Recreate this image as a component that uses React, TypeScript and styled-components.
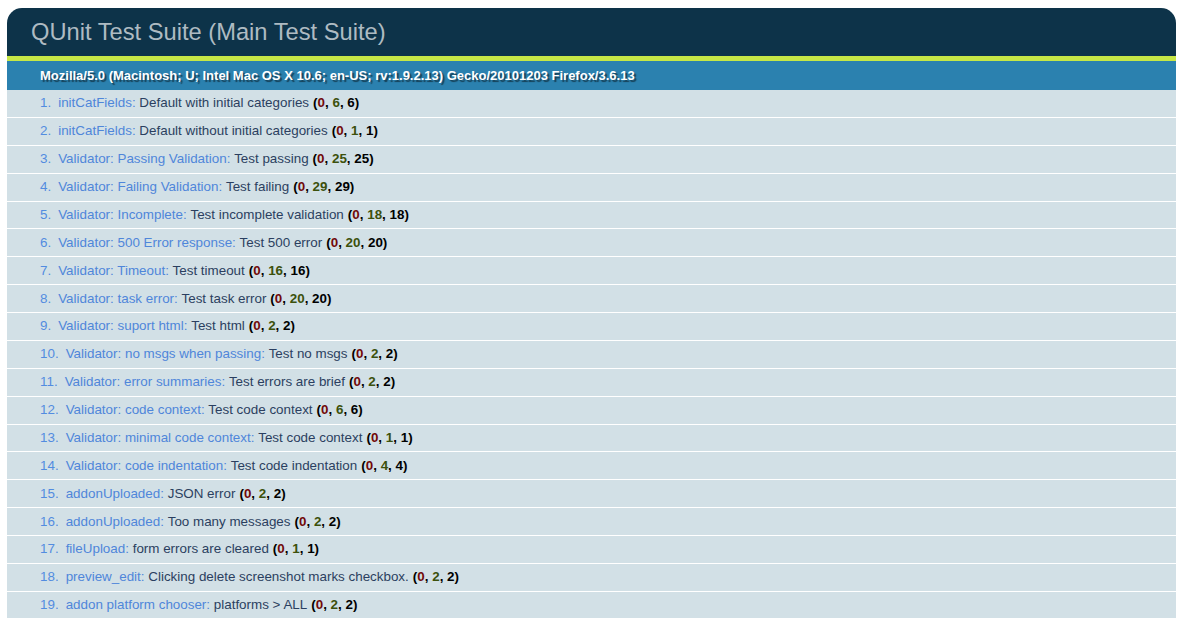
import React from "react";
import styled, { createGlobalStyle } from "styled-components";

const GlobalStyle = createGlobalStyle`
  html, body { background: #ffffff; }
  body {
    margin: 8px 8px 0 7px;
    font-family: "Liberation Sans", Arial, Helvetica, sans-serif;
    font-size: 16px;
  }
`;

const Suite = styled.div`
  display: flex;
  flex-direction: column;
`;

const Title = styled.h1`
  margin: 0;
  padding: 12px 0 12px 24px;
  font-size: 23.7px;
  line-height: 24px;
  font-weight: normal;
  color: #aebbc2;
  background: #0d3349;
  border-radius: 15px 15px 0 0;
`;

const Banner = styled.div`
  height: 5px;
  background: #c6e746;
`;

const UserAgent = styled.h2`
  margin: 0;
  padding: 6.5px 0 6.5px 33px;
  font-size: 13px;
  line-height: 16px;
  font-weight: bold;
  color: #ffffff;
  background: #2b81af;
  text-shadow: rgba(0, 0, 0, 0.5) 2px 2px 1px;
`;

const TestList = styled.ol`
  margin: 0;
  padding: 0;
  list-style: none;
  font-size: 13.4px;
`;

const TestItem = styled.li`
  display: flex;
  align-items: baseline;
  padding: 5.45px 6px 5.45px 33px;
  line-height: 16px;
  background: #d2e0e6;
  color: #528ce0;
  border-bottom: 1px solid #ffffff;
`;

const Index = styled.span`
  margin-right: 7px;
`;

const ModuleName = styled.span`
  color: #4f86da;
`;

const TestName = styled.span`
  color: #2b3f60;
`;

const Counts = styled.b`
  color: #000000;
  margin-left: 4px;
`;

const Count = styled.b<{ $kind: "failed" | "passed" }>`
  color: ${(p) => (p.$kind === "failed" ? "#710909" : "#3c510c")};
`;

type Test = { module: string; name: string; passed: number };

const tests: Test[] = [
  { module: "initCatFields", name: "Default with initial categories", passed: 6 },
  { module: "initCatFields", name: "Default without initial categories", passed: 1 },
  { module: "Validator: Passing Validation", name: "Test passing", passed: 25 },
  { module: "Validator: Failing Validation", name: "Test failing", passed: 29 },
  { module: "Validator: Incomplete", name: "Test incomplete validation", passed: 18 },
  { module: "Validator: 500 Error response", name: "Test 500 error", passed: 20 },
  { module: "Validator: Timeout", name: "Test timeout", passed: 16 },
  { module: "Validator: task error", name: "Test task error", passed: 20 },
  { module: "Validator: suport html", name: "Test html", passed: 2 },
  { module: "Validator: no msgs when passing", name: "Test no msgs", passed: 2 },
  { module: "Validator: error summaries", name: "Test errors are brief", passed: 2 },
  { module: "Validator: code context", name: "Test code context", passed: 6 },
  { module: "Validator: minimal code context", name: "Test code context", passed: 1 },
  { module: "Validator: code indentation", name: "Test code indentation", passed: 4 },
  { module: "addonUploaded", name: "JSON error", passed: 2 },
  { module: "addonUploaded", name: "Too many messages", passed: 2 },
  { module: "fileUpload", name: "form errors are cleared", passed: 1 },
  { module: "preview_edit", name: "Clicking delete screenshot marks checkbox.", passed: 2 },
  { module: "addon platform chooser", name: "platforms > ALL", passed: 2 },
];

export default function App() {
  return (
    <>
      <GlobalStyle />
      <Suite>
        <Title>QUnit Test Suite (Main Test Suite)</Title>
        <Banner />
        <UserAgent>
          Mozilla/5.0 (Macintosh; U; Intel Mac OS X 10.6; en-US; rv:1.9.2.13) Gecko/20101203 Firefox/3.6.13
        </UserAgent>
        <TestList>
          {tests.map((t, i) => (
            <TestItem key={i}>
              <Index>{i + 1}.</Index>
              <span>
                <ModuleName>{t.module}:</ModuleName>&nbsp;
                <TestName>{t.name}</TestName>
                <Counts>
                  (<Count $kind="failed">0</Count>, <Count $kind="passed">{t.passed}</Count>, {t.passed})
                </Counts>
              </span>
            </TestItem>
          ))}
        </TestList>
      </Suite>
    </>
  );
}
